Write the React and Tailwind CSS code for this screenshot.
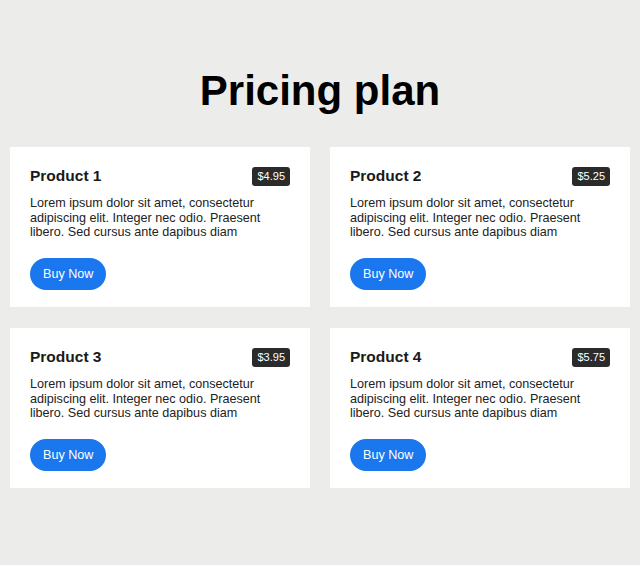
import React from 'react';

const products = [
    { id: 1, name: 'Product 1', price: '$4.95' },
    { id: 2, name: 'Product 2', price: '$5.25' },
    { id: 3, name: 'Product 3', price: '$3.95' },
    { id: 4, name: 'Product 4', price: '$5.75' },
];

const PlanCard = ({ product }) => (
    <div className="bg-white px-5 pt-[19px] pb-[17px] h-[160px] flex flex-col">
        <div className="flex items-center justify-between">
            <h3 className="text-[15.5px] font-bold text-[#1a1a1a] leading-[20px]">{product.name}</h3>
            <span className="bg-[#2b2b2b] text-white text-[11px] leading-[19px] px-[5px] rounded-[3px]">{product.price}</span>
        </div>
        <p className="mt-[10px] text-[12.6px] leading-[14.5px] text-[#222]">
            Lorem ipsum dolor sit amet, consectetur adipiscing elit. Integer nec odio. Praesent libero. Sed cursus ante dapibus diam
        </p>
        <div className="mt-auto">
            <button className="bg-[#1a77ed] text-white text-[12.6px] h-[32px] px-[13px] rounded-full">Buy Now</button>
        </div>
    </div>
);

export default function App() {
    return (
        <div className="min-h-[565px] bg-[#ecedea] pt-[66px] px-[10px]" style={{ fontFamily: '"Liberation Sans", Arial, sans-serif' }}>
            <h1 className="text-center text-[42px] font-bold text-black leading-[50px]">Pricing plan</h1>
            <div className="grid grid-cols-2 gap-x-[20px] gap-y-[21px] mt-[31px]">
                {products.map(product => (
                    <PlanCard key={product.id} product={product} />
                ))}
            </div>
        </div>
    );
}
